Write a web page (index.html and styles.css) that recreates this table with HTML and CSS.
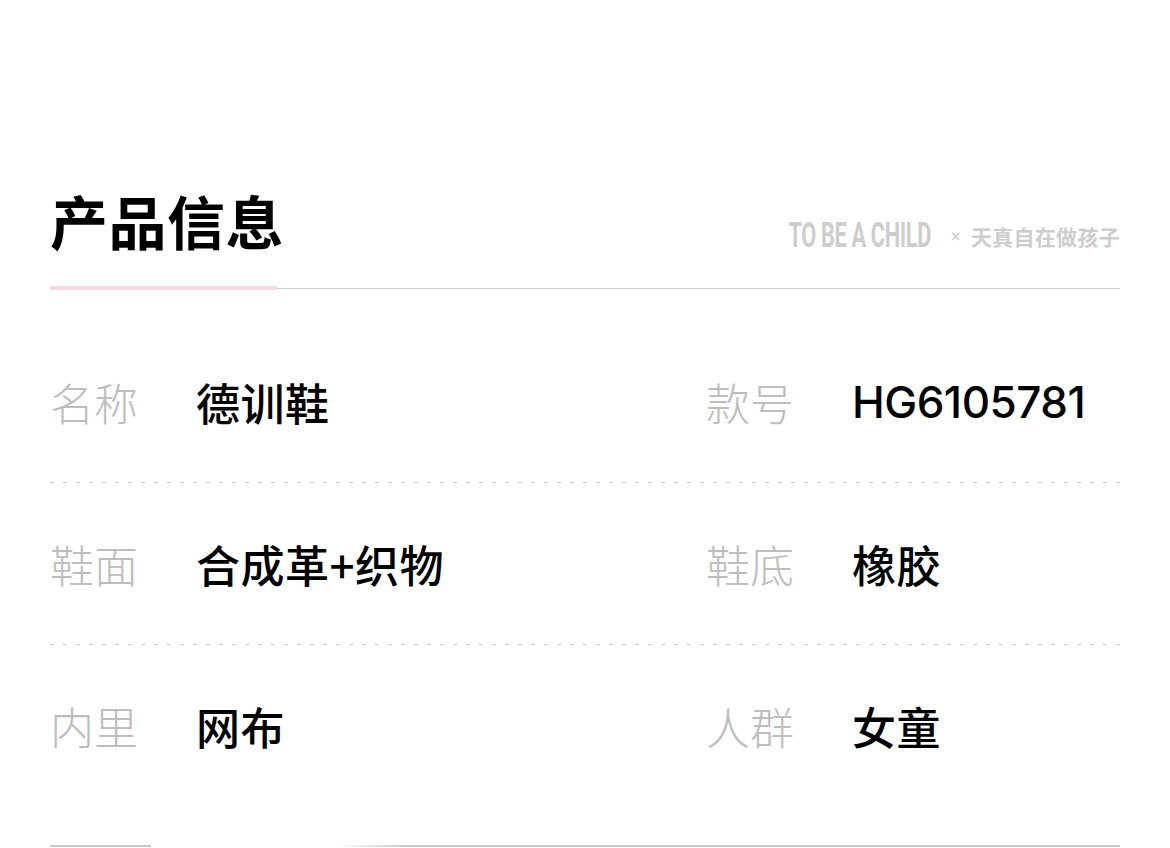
FILE: index.html
```html
<!DOCTYPE html>
<html lang="zh">
<head>
<meta charset="utf-8">
<title>产品信息</title>
<link rel="stylesheet" href="styles.css">
</head>
<body>
<div class="page">
  <section class="info">
    <header class="head">
      <h2 class="title">产品信息</h2>
      <div class="tagline"><span class="en">TO BE A CHILD</span><span class="x">×</span><span class="cn">天真自在做孩子</span></div>
    </header>
    <div class="rows">
      <div class="row">
        <div class="cell"><span class="label">名称</span><span class="value">德训鞋</span></div>
        <div class="cell"><span class="label">款号</span><span class="value num">HG6105781</span></div>
      </div>
      <div class="row">
        <div class="cell"><span class="label">鞋面</span><span class="value">合成革+织物</span></div>
        <div class="cell"><span class="label">鞋底</span><span class="value">橡胶</span></div>
      </div>
      <div class="row last">
        <div class="cell"><span class="label">内里</span><span class="value">网布</span></div>
        <div class="cell"><span class="label">人群</span><span class="value">女童</span></div>
      </div>
    </div>
  </section>
  <div class="next">
    <span class="seg-a"></span>
    <span class="seg-gap"></span>
    <span class="seg-b"></span>
  </div>
</div>
</body>
</html>
```
FILE: styles.css
```css
html, body {
  margin: 0;
  padding: 0;
  background: #fff;
}
body {
  font-family: "Noto Sans CJK SC", "Noto Sans", sans-serif;
  color: #000;
  width: 1170px;
  height: 848px;
  overflow: hidden;
}
.page {
  padding: 0 50px;
}
.info {
  padding-top: 182px;
}
.head {
  display: flex;
  justify-content: space-between;
  align-items: flex-end;
  border-bottom: 1px solid #cfcfcf;
  position: relative;
  height: 107px;
  box-sizing: border-box;
}
.head::after {
  content: "";
  position: absolute;
  left: 0;
  bottom: -2px;
  width: 227px;
  height: 4px;
  background: #f3dde0;
}
.title {
  margin: 0;
  font-size: 58px;
  line-height: 76px;
  font-weight: 700;
  letter-spacing: 0.5px;
  align-self: flex-start;
}
.tagline {
  display: flex;
  align-items: center;
  color: #cdcdcd;
  padding-bottom: 34px;
  height: 36px;
}
.en {
  display: inline-block;
  font-family: "Roboto", "Liberation Sans", sans-serif;
  font-weight: 700;
  font-size: 35px;
  letter-spacing: -0.5px;
  line-height: 36px;
  transform: scaleX(0.62);
  transform-origin: right center;
  margin-left: -90px;
  white-space: nowrap;
}
.x {
  font-family: "Noto Sans", sans-serif;
  font-size: 18px;
  margin: 0 10px 0 20px;
  line-height: 36px;
}
.cn {
  font-size: 21px;
  font-weight: 700;
  line-height: 36px;
  letter-spacing: 0.3px;
}
.rows {
  padding-top: 32px;
}
.row {
  display: grid;
  grid-template-columns: 656px 1fr;
  height: 162px;
  align-items: center;
  background-image: repeating-linear-gradient(to right, #cbcbcb 0 4px, transparent 4px 13px);
  background-size: 100% 1px;
  background-position: left bottom;
  background-repeat: no-repeat;
}
.row.last {
  background: none;
}
.cell {
  display: flex;
  align-items: center;
}
.label {
  width: 146px;
  flex: none;
  font-size: 44px;
  color: #bdbdbd;
  font-weight: 300;
  line-height: 60px;
}
.value {
  font-size: 44px;
  font-weight: 500;
  line-height: 60px;
  letter-spacing: 0.5px;
}
.value.num {
  font-family: "Inter", "Noto Sans", sans-serif;
  font-weight: 500;
  letter-spacing: -0.5px;
}
.next {
  display: flex;
  padding-top: 38px;
}
.next span {
  height: 2px;
  display: block;
}
.seg-a {
  width: 101px;
  background: #c8c8c8;
}
.seg-gap {
  width: 186px;
}
.seg-b {
  flex: 1;
  background: linear-gradient(to right, rgba(200,200,200,0) 0, #c8c8c8 70px, #c8c8c8 100%);
}
```
